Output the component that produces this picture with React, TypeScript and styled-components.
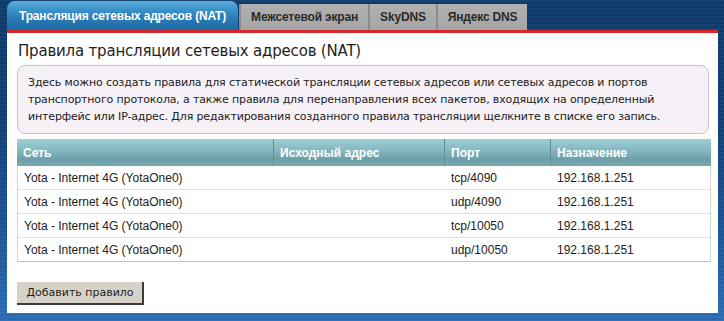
import React from "react";
import styled, { createGlobalStyle } from "styled-components";

const Global = createGlobalStyle`
  html, body { margin: 0; padding: 0; }
  body { width: 724px; height: 321px; overflow: hidden; }
`;

const Page = styled.div`
  width: 724px;
  height: 321px;
  box-sizing: border-box;
  padding: 0 6px 0 7px;
  display: flex;
  flex-direction: column;
  background:
    repeating-linear-gradient(180deg, rgba(255,255,255,0.03) 0 2px, rgba(0,0,0,0.03) 2px 4px),
    linear-gradient(180deg, #0e3b6c 0%, #103f74 35%, #1c5496 70%, #2c6db6 100%);
`;

const TabBar = styled.div`
  height: 30px;
  display: flex;
  align-items: flex-end;
`;

const Tab = styled.div<{ $active?: boolean }>`
  box-sizing: border-box;
  height: ${(p) => (p.$active ? "29px" : "26px")};
  padding: 0 ${(p) => (p.$active ? "12px" : "10px")};
  display: flex;
  align-items: center;
  font-family: "Liberation Sans", Arial, sans-serif;
  font-weight: bold;
  font-size: 12px;
  letter-spacing: -0.17px;
  white-space: nowrap;
  color: ${(p) => (p.$active ? "#ffffff" : "#2a2a2a")};
  border-radius: ${(p) => (p.$active ? "8px 8px 0 0" : "0")};
  margin-right: ${(p) => (p.$active ? "1px" : "0")};
  border-left: ${(p) => (p.$active ? "none" : "2px solid #8c8c8c")};
  background: ${(p) =>
    p.$active
      ? "linear-gradient(180deg, #5fb0de 0%, #3a92c8 30%, #2a7cb6 60%, #1d6aa2 100%)"
      : "linear-gradient(180deg, #b0b0b0 0%, #a6a6a6 100%)"};
`;

const RedLine = styled.div`
  height: 3px;
  background: #d8282c;
`;

const Panel = styled.div`
  height: 280px;
  box-sizing: border-box;
  background: #ffffff;
  padding: 7px 10px 0 10px;
  display: flex;
  flex-direction: column;
  align-items: flex-start;
`;

const Title = styled.h1`
  margin: 0 0 0 1px;
  font-family: "DejaVu Sans", Verdana, sans-serif;
  font-weight: normal;
  font-size: 15px;
  letter-spacing: -0.2px;
  line-height: 22px;
  color: #1e1e1e;
`;

const Info = styled.div`
  margin-top: 3px;
  width: 692px;
  box-sizing: border-box;
  padding: 8px 10px 8px 10px;
  background: #f6f1f6;
  border: 1px solid #c6c6c6;
  border-radius: 8px;
  font-family: "DejaVu Sans", Verdana, sans-serif;
  font-size: 11px;
  letter-spacing: -0.15px;
  line-height: 17px;
  color: #222222;
`;

const Table = styled.div`
  margin-top: 5px;
  width: 692px;
  border-left: 1px solid #d4d4d4;
  border-right: 1px solid #d4d4d4;
  border-bottom: 1px solid #c4c4c4;
`;

const Grid = `
  display: grid;
  grid-template-columns: 256px 171px 106px 1fr;
`;

const HeadRow = styled.div`
  ${Grid}
  height: 27px;
  margin: 0 -1px;
  background: linear-gradient(180deg, #9fcdd4 0%, #86b9c2 40%, #6d9fa9 75%, #7aaab3 100%);
`;

const HeadCell = styled.div<{ $first?: boolean }>`
  display: flex;
  align-items: center;
  padding-left: 6px;
  font-family: "Liberation Sans", Arial, sans-serif;
  font-weight: bold;
  font-size: 12px;
  color: #ffffff;
  border-left: ${(p) => (p.$first ? "none" : "1px solid #5f8f99")};
`;

const Row = styled.div<{ $last?: boolean }>`
  ${Grid}
  height: 23px;
  border-bottom: ${(p) => (p.$last ? "none" : "1px solid #e2e2e2")};
`;

const Cell = styled.div`
  display: flex;
  align-items: center;
  padding-left: 6px;
  font-family: "Liberation Sans", Arial, sans-serif;
  font-size: 12px;
  color: #222222;
  white-space: nowrap;
`;

const Button = styled.button`
  margin-top: 20px;
  height: 23px;
  width: 127px;
  box-sizing: border-box;
  padding: 0 0 0 1px;
  background: #d6d2ca;
  border: none;
  border-right: 2px solid #3c3c3c;
  border-bottom: 2px solid #3c3c3c;
  font-family: "DejaVu Sans", Verdana, sans-serif;
  font-size: 11px;
  color: #1e1e1e;
`;

const rows = [
  ["Yota - Internet 4G (YotaOne0)", "", "tcp/4090", "192.168.1.251"],
  ["Yota - Internet 4G (YotaOne0)", "", "udp/4090", "192.168.1.251"],
  ["Yota - Internet 4G (YotaOne0)", "", "tcp/10050", "192.168.1.251"],
  ["Yota - Internet 4G (YotaOne0)", "", "udp/10050", "192.168.1.251"],
];

export default function App() {
  return (
    <>
      <Global />
      <Page>
        <TabBar>
          <Tab $active>Трансляция сетевых адресов (NAT)</Tab>
          <Tab>Межсетевой экран</Tab>
          <Tab>SkyDNS</Tab>
          <Tab>Яндекс DNS</Tab>
        </TabBar>
        <RedLine />
        <Panel>
          <Title>Правила трансляции сетевых адресов (NAT)</Title>
          <Info>
            Здесь можно создать правила для статической трансляции сетевых адресов или сетевых адресов и портов
            транспортного протокола, а также правила для перенаправления всех пакетов, входящих на определенный
            интерфейс или IP-адрес. Для редактирования созданного правила трансляции щелкните в списке его запись.
          </Info>
          <Table>
            <HeadRow>
              <HeadCell $first>Сеть</HeadCell>
              <HeadCell>Исходный адрес</HeadCell>
              <HeadCell>Порт</HeadCell>
              <HeadCell>Назначение</HeadCell>
            </HeadRow>
            {rows.map((r, i) => (
              <Row key={i} $last={i === rows.length - 1}>
                {r.map((c, j) => (
                  <Cell key={j}>{c}</Cell>
                ))}
              </Row>
            ))}
          </Table>
          <Button>Добавить правило</Button>
        </Panel>
      </Page>
    </>
  );
}
